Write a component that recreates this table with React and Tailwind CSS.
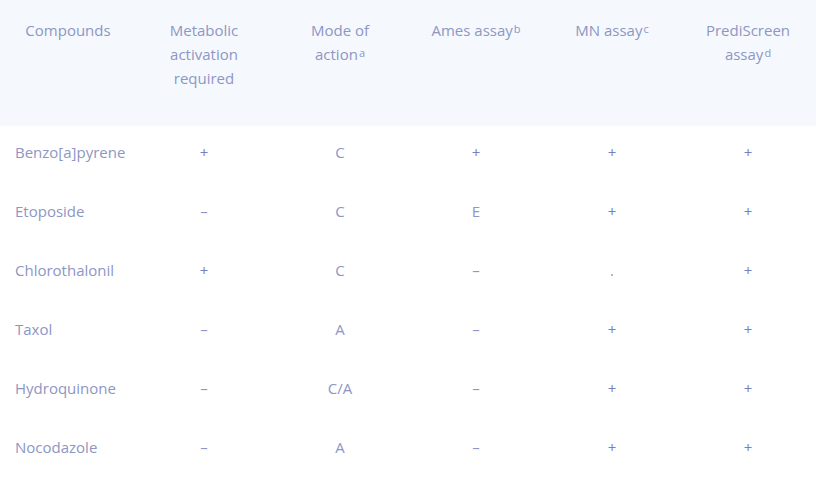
import React from "react";

const rows = [
  ["Benzo[a]pyrene", "+", "C", "+", "+", "+"],
  ["Etoposide", "–", "C", "E", "+", "+"],
  ["Chlorothalonil", "+", "C", "–", ".", "+"],
  ["Taxol", "–", "A", "–", "+", "+"],
  ["Hydroquinone", "–", "C/A", "–", "+", "+"],
  ["Nocodazole", "–", "A", "–", "+", "+"],
];

function Sup({ children }) {
  return <sup className="text-[11px] leading-none relative -top-[3px] ml-[1px]">{children}</sup>;
}

export default function App() {
  return (
    <div
      className="w-[816px] h-[502px] bg-white text-[#8d96c4] text-[15px]"
      style={{ fontFamily: '"Open Sans", "Liberation Sans", sans-serif' }}
    >
      <table className="w-full table-fixed border-collapse">
        <thead>
          <tr className="bg-[#f5f9fe] h-[126px] align-top">
            <th className="font-normal text-center pt-[18px] leading-6 px-2">Compounds</th>
            <th className="font-normal text-center pt-[18px] leading-6 px-2">
              Metabolic
              <br />
              activation
              <br />
              required
            </th>
            <th className="font-normal text-center pt-[18px] leading-6 px-2">
              Mode of
              <br />
              action<Sup>a</Sup>
            </th>
            <th className="font-normal text-center pt-[18px] leading-6 px-2">
              Ames assay<Sup>b</Sup>
            </th>
            <th className="font-normal text-center pt-[18px] leading-6 px-2">
              MN assay<Sup>c</Sup>
            </th>
            <th className="font-normal text-center pt-[18px] leading-6 px-2">
              PrediScreen
              <br />
              assay<Sup>d</Sup>
            </th>
          </tr>
        </thead>
        <tbody>
          {rows.map((r, i) => (
            <tr key={i} className="h-[59px] align-top">
              {r.map((c, j) => (
                <td
                  key={j}
                  className={
                    j === 0
                      ? "pt-[14px] leading-6 pl-[15px] text-left"
                      : c === "+"
                      ? "pt-[14px] leading-6 text-center text-[#7483c6]"
                      : "pt-[14px] leading-6 text-center"
                  }
                >
                  {c}
                </td>
              ))}
            </tr>
          ))}
        </tbody>
      </table>
    </div>
  );
}
